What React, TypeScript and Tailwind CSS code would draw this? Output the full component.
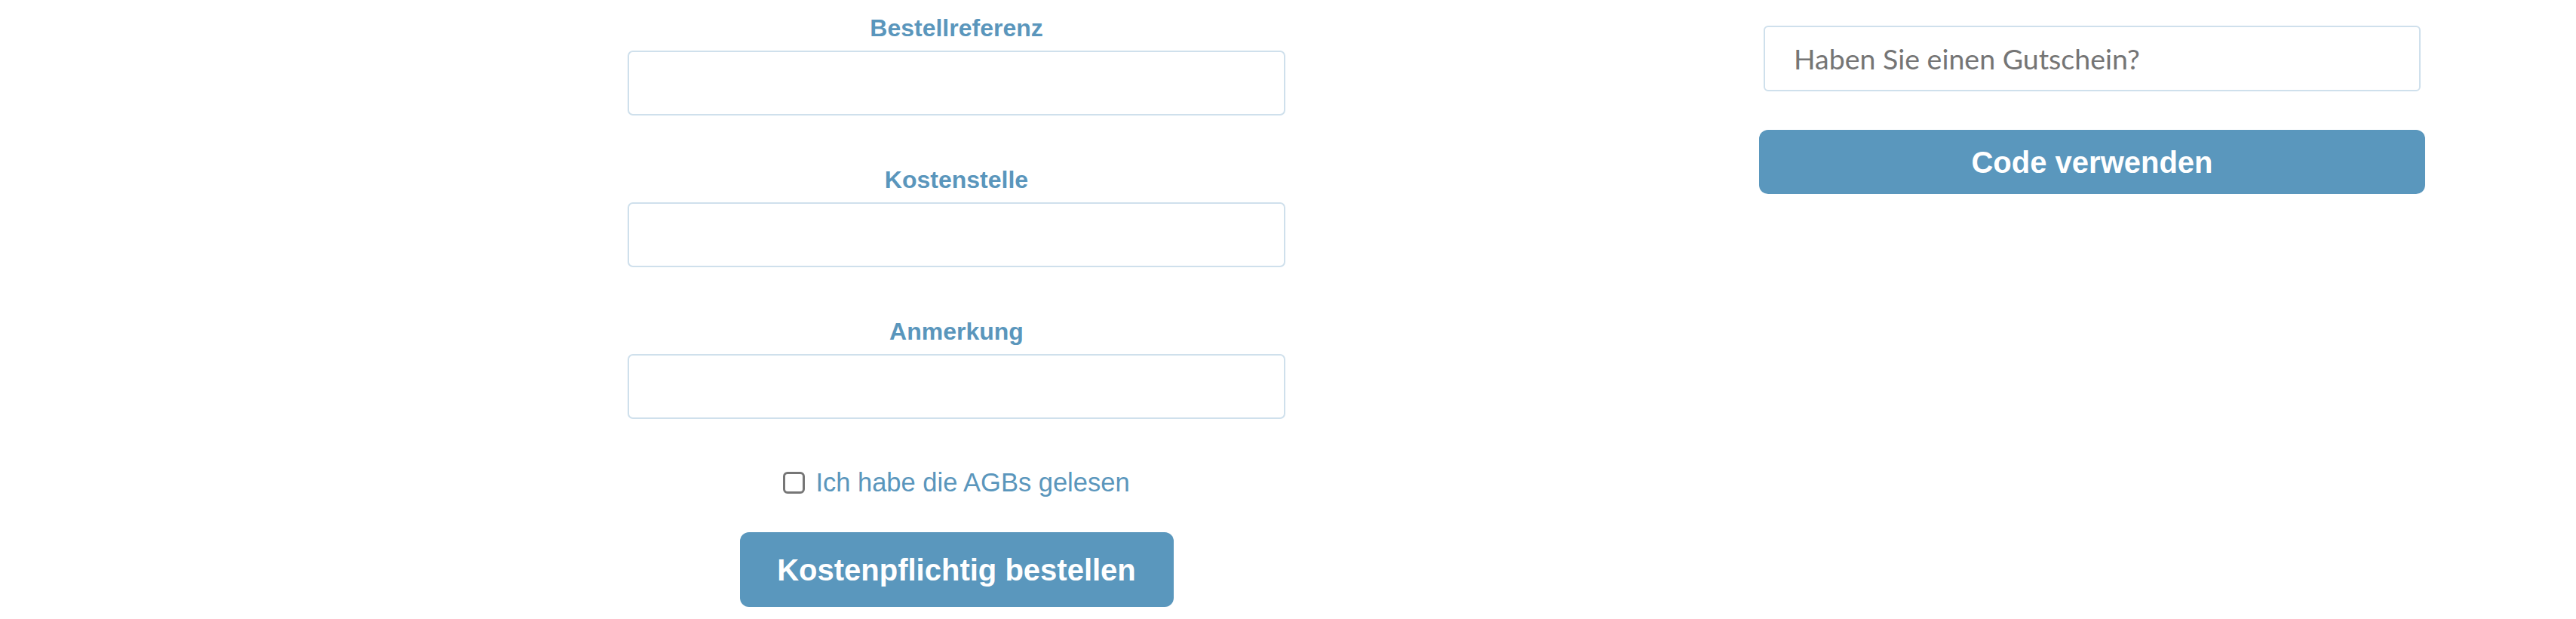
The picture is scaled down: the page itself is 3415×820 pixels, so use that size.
import React from "react";

const labelCls =
  "block text-center text-[32px] leading-[37px] font-bold text-[#5a96bc] mb-[11px]";
const inputCls =
  "block w-full h-[86px] border-2 border-[#cfe0ec] rounded-[7px] bg-white outline-none px-[20px] text-[32px]";

function Field({ label }: { label: string }) {
  return (
    <div>
      <label className={labelCls}>{label}</label>
      <input type="text" className={inputCls} />
    </div>
  );
}

export default function App() {
  return (
    <div
      className="w-[3415px] h-[820px] bg-white flex items-start overflow-hidden"
      style={{ fontFamily: '"Liberation Sans", Arial, sans-serif' }}
    >
      <div className="ml-[832px] w-[872px] pt-[19px] flex flex-col">
        <div className="flex flex-col gap-[67px]">
          <Field label="Bestellreferenz" />
          <Field label="Kostenstelle" />
          <Field label="Anmerkung" />
        </div>
        <div className="mt-[64px] flex items-center justify-center gap-[14px] h-[40px]">
          <input
            type="checkbox"
            className="appearance-none w-[29px] h-[29px] border-[3px] border-[#767676] rounded-[6px] bg-white"
          />
          <span className="text-[34.5px] leading-[40px] text-[#5a96bc]">
            Ich habe die AGBs gelesen
          </span>
        </div>
        <div className="mt-[46px] flex justify-center">
          <button className="w-[575px] h-[99px] rounded-[12px] bg-[#5a97bd] text-white text-[40px] font-bold">
            Kostenpflichtig bestellen
          </button>
        </div>
      </div>
      <div className="ml-[628px] w-[883px] pt-[34px] flex flex-col">
        <div className="px-[6px]">
          <input
            type="text"
            placeholder="Haben Sie einen Gutschein?"
            className="block w-full h-[87px] border-2 border-[#cfe0ec] rounded-[6px] bg-white outline-none pl-[38px] text-[37.5px] placeholder:text-[#757575]"
            style={{ fontFamily: 'Lato, sans-serif' }}
          />
        </div>
        <button className="mt-[51px] w-full h-[85px] rounded-[12px] bg-[#5a97bd] text-white text-[40px] font-bold">
          Code verwenden
        </button>
      </div>
    </div>
  );
}
